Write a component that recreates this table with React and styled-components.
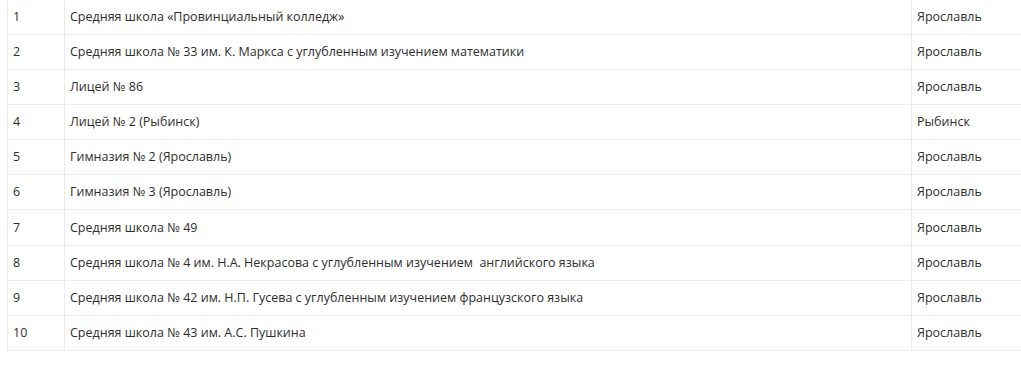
import React from "react";
import styled, { createGlobalStyle } from "styled-components";

const GlobalStyle = createGlobalStyle`
  html, body {
    margin: 0;
    padding: 0;
    background: #fff;
    overflow: hidden;
  }
`;

const Page = styled.div`
  padding: 0 0 0 7px;
  width: 1021px;
  height: 385px;
  box-sizing: border-box;
  overflow: hidden;
`;

const Table = styled.table`
  border-collapse: collapse;
  table-layout: fixed;
  width: 1060px;
  font-family: "Open Sans", "Liberation Sans", sans-serif;
  font-size: 12.5px;
  color: #2e2e2e;
`;

const Row = styled.tr`
  height: ${({ $first }) => ($first ? "34px" : "35.2px")};
`;

const Cell = styled.td`
  box-sizing: border-box;
  border: 1px solid #ececec;
  border-top: ${({ $first }) => ($first ? "none" : "1px solid #ececec")};
  padding: 0 5px 1px;
  width: ${({ $width }) => $width};
  vertical-align: middle;
  white-space: pre;
`;

const schools = [
  ["1", "Средняя школа «Провинциальный колледж»", "Ярославль"],
  ["2", "Средняя школа № 33 им. К. Маркса с углубленным изучением математики", "Ярославль"],
  ["3", "Лицей № 86", "Ярославль"],
  ["4", "Лицей № 2 (Рыбинск)", "Рыбинск"],
  ["5", "Гимназия № 2 (Ярославль)", "Ярославль"],
  ["6", "Гимназия № 3 (Ярославль)", "Ярославль"],
  ["7", "Средняя школа № 49", "Ярославль"],
  ["8", "Средняя школа № 4 им. Н.А. Некрасова с углубленным изучением  английского языка", "Ярославль"],
  ["9", "Средняя школа № 42 им. Н.П. Гусева с углубленным изучением французского языка", "Ярославль"],
  ["10", "Средняя школа № 43 им. А.С. Пушкина", "Ярославль"],
];

const App = () => (
  <Page>
    <GlobalStyle />
    <Table>
      <tbody>
        {schools.map(([num, name, city], i) => (
          <Row key={num} $first={i === 0}>
            <Cell $width="57px" $first={i === 0}>{num}</Cell>
            <Cell $width="847px" $first={i === 0}>{name}</Cell>
            <Cell $first={i === 0}>{city}</Cell>
          </Row>
        ))}
      </tbody>
    </Table>
  </Page>
);

export default App;
